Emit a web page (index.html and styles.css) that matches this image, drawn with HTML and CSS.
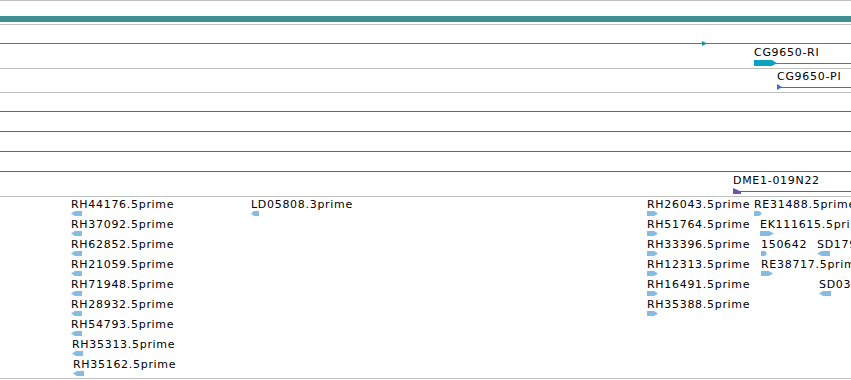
FILE: index.html
```html
<!DOCTYPE html>
<html lang="en">
<head>
  <meta charset="UTF-8" />
  <title>Tracks</title>
  <link rel="stylesheet" href="styles.css">
</head>
<body>
  <div class="view">
    <!-- overview -->
    <div class="track track-overview">
      <div class="overview-bar"></div>
    </div>

    <!-- gene models -->
    <div class="track">
      <div class="lane">
        <div class="feature teal" style="left:0;width:851px">
          <div class="strand-line"></div>
          <div class="tick right" style="left:702px"></div>
        </div>
      </div>
      <div class="lane">
        <div class="feature teal" style="left:754px;width:97px">
          <div class="name">CG9650-RI</div>
          <div class="strand-line" style="left:20px"></div>
          <div class="cds right"></div>
        </div>
      </div>
    </div>

    <div class="track">
      <div class="lane">
        <div class="feature blue" style="left:777px;width:74px">
          <div class="name">CG9650-PI</div>
          <div class="strand-line"></div>
          <div class="tick right"></div>
        </div>
      </div>
    </div>

    <!-- clones -->
    <div class="track">
      <div class="lane"><div class="feature purple" style="left:0;width:851px"><div class="strand-line"></div></div></div>
      <div class="lane"><div class="feature purple" style="left:0;width:851px"><div class="strand-line"></div></div></div>
      <div class="lane"><div class="feature purple" style="left:0;width:851px"><div class="strand-line"></div></div></div>
      <div class="lane"><div class="feature purple" style="left:0;width:851px"><div class="strand-line"></div></div></div>
      <div class="lane">
        <div class="feature purple" style="left:733px;width:118px">
          <div class="name">DME1-019N22</div>
          <div class="strand-line"></div>
          <div class="wedge"></div>
        </div>
      </div>
    </div>

    <!-- ESTs -->
    <div class="track track-est">
      <div class="lane">
        <div class="est" style="left:71px"><div class="name">RH44176.5prime</div><div class="est-glyph minus" style="width:11px"></div></div>
        <div class="est" style="left:251px"><div class="name">LD05808.3prime</div><div class="est-glyph minus" style="width:8px"></div></div>
        <div class="est" style="left:647px"><div class="name">RH26043.5prime</div><div class="est-glyph plus" style="width:11px"></div></div>
        <div class="est" style="left:754px"><div class="name">RE31488.5prime</div><div class="est-glyph plus" style="width:8px"></div></div>
      </div>
      <div class="lane">
        <div class="est" style="left:71px"><div class="name">RH37092.5prime</div><div class="est-glyph minus" style="width:11px"></div></div>
        <div class="est" style="left:647px"><div class="name">RH51764.5prime</div><div class="est-glyph plus" style="width:11px"></div></div>
        <div class="est" style="left:760px"><div class="name">EK111615.5prime</div><div class="est-glyph plus" style="width:14px"></div></div>
      </div>
      <div class="lane">
        <div class="est" style="left:71px"><div class="name">RH62852.5prime</div><div class="est-glyph minus" style="width:11px"></div></div>
        <div class="est" style="left:647px"><div class="name">RH33396.5prime</div><div class="est-glyph plus" style="width:11px"></div></div>
        <div class="est" style="left:761px"><div class="name">150642</div><div class="est-glyph plus" style="width:6px"></div></div>
        <div class="est" style="left:817px"><div class="name">SD17954.5prime</div><div class="est-glyph minus" style="width:13px"></div></div>
      </div>
      <div class="lane">
        <div class="est" style="left:71px"><div class="name">RH21059.5prime</div><div class="est-glyph minus" style="width:11px"></div></div>
        <div class="est" style="left:647px"><div class="name">RH12313.5prime</div><div class="est-glyph plus" style="width:11px"></div></div>
        <div class="est" style="left:761px"><div class="name">RE38717.5prime</div><div class="est-glyph plus" style="width:12px"></div></div>
      </div>
      <div class="lane">
        <div class="est" style="left:71px"><div class="name">RH71948.5prime</div><div class="est-glyph minus" style="width:11px"></div></div>
        <div class="est" style="left:647px"><div class="name">RH16491.5prime</div><div class="est-glyph plus" style="width:11px"></div></div>
        <div class="est" style="left:819px"><div class="name">SD03283.5prime</div><div class="est-glyph minus" style="width:12px"></div></div>
      </div>
      <div class="lane">
        <div class="est" style="left:71px"><div class="name">RH28932.5prime</div><div class="est-glyph minus" style="width:11px"></div></div>
        <div class="est" style="left:647px"><div class="name">RH35388.5prime</div><div class="est-glyph plus" style="width:11px"></div></div>
      </div>
      <div class="lane">
        <div class="est" style="left:71px"><div class="name">RH54793.5prime</div><div class="est-glyph minus" style="width:11px"></div></div>
      </div>
      <div class="lane">
        <div class="est" style="left:72px"><div class="name">RH35313.5prime</div><div class="est-glyph minus" style="width:11px"></div></div>
      </div>
      <div class="lane">
        <div class="est" style="left:73px"><div class="name">RH35162.5prime</div><div class="est-glyph minus" style="width:11px"></div></div>
      </div>
    </div>
  </div>
</body>
</html>
```

FILE: styles.css
```css
body {
  margin: 0;
  font-family: 'DejaVu Sans', sans-serif;
  font-size: 11px;
  letter-spacing: 0.7px;
  color: #000;
  background-color: #fff;
}

.view {
  width: 851px;
  height: 380px;
  overflow: hidden;
}

.track {
  border-top: 1px solid #c0c0c0;
  padding-bottom: 3px;
}

.track-overview {
  height: 23px;
  padding-bottom: 0;
}

.overview-bar {
  margin-top: 15px;
  height: 6px;
  background-color: #418f93;
}

.track-est {
  padding-top: 1px;
  padding-bottom: 0;
  border-bottom: 1px solid #c0c0c0;
}

.lane {
  position: relative;
  height: 20px;
}

.feature,
.est {
  position: absolute;
  top: 0;
  height: 20px;
}

.name {
  line-height: 14px;
  white-space: nowrap;
}

.feature .name {
  margin-top: 1px;
}

/* Linie des Transkripts */
.strand-line {
  position: absolute;
  top: 18px;
  left: 0;
  right: 0;
  height: 1px;
}

.teal .strand-line { background-color: #1a90ad; }
.blue .strand-line { background-color: #3b6dcf; }
.purple .strand-line { background-color: #6b5aa4; }

.tick {
  position: absolute;
  top: 16px;
  left: 0;
  width: 5px;
  height: 5px;
  clip-path: polygon(0 0, 100% 50%, 0 100%);
}

.teal .tick { background-color: #1a90ad; }
.blue .tick { top: 15px; height: 6px; background-color: #3b6dcf; }

.cds {
  position: absolute;
  top: 15px;
  left: 0;
  width: 23px;
  height: 6px;
  background-color: #0fa0c0;
  clip-path: polygon(0 0, 78% 0, 100% 55%, 78% 100%, 0 100%);
}

.wedge {
  position: absolute;
  top: 15px;
  left: 0;
  width: 8px;
  height: 6px;
  background-color: #6e55ad;
  clip-path: polygon(0 0, 100% 60%, 100% 100%, 0 100%);
}

/* EST-Pfeile */
.est-glyph {
  position: absolute;
  top: 13px;
  left: 0;
  height: 5px;
  background-color: #86bce2;
}

.est-glyph.minus {
  clip-path: polygon(35% 0, 100% 0, 100% 100%, 35% 100%, 0 50%);
}

.est-glyph.plus {
  clip-path: polygon(0 0, 65% 0, 100% 50%, 65% 100%, 0 100%);
}
```
